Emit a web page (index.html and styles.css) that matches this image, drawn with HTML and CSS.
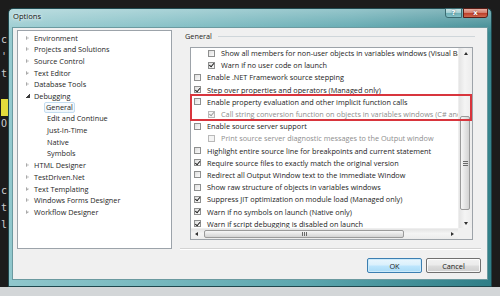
FILE: index.html
```html
<!DOCTYPE html>
<html>
<head>
<meta charset="utf-8">
<title>Options</title>
<link rel="stylesheet" href="styles.css">
</head>
<body>
<div class="desktop">
  <div class="editor">
    <div class="code">
      <div>c</div><div>'</div><div>t</div><div>&nbsp;</div><div class="hl">&nbsp;</div><div>O</div><div>&nbsp;</div><div>&nbsp;</div><div>&nbsp;</div><div>c</div><div>t</div><div>l.</div>
    </div>
  </div>
  <div class="statusbar"></div>
</div>

<div class="window">
  <div class="titlebar">
    <span class="title">Options</span>
    <div class="caption-btns">
      <span class="cap help">?</span>
      <span class="cap close">x</span>
    </div>
  </div>
  <div class="client">
    <div class="tree">
      <div class="node"><span class="tw"></span><span>Environment</span></div>
      <div class="node"><span class="tw"></span><span>Projects and Solutions</span></div>
      <div class="node"><span class="tw"></span><span>Source Control</span></div>
      <div class="node"><span class="tw"></span><span>Text Editor</span></div>
      <div class="node"><span class="tw"></span><span>Database Tools</span></div>
      <div class="node"><span class="tw open"></span><span>Debugging</span></div>
      <div class="node l2"><span class="lbl sel">General</span></div>
      <div class="node l2"><span class="lbl">Edit and Continue</span></div>
      <div class="node l2"><span class="lbl">Just-In-Time</span></div>
      <div class="node l2"><span class="lbl">Native</span></div>
      <div class="node l2"><span class="lbl">Symbols</span></div>
      <div class="node"><span class="tw"></span><span>HTML Designer</span></div>
      <div class="node"><span class="tw"></span><span>TestDriven.Net</span></div>
      <div class="node"><span class="tw"></span><span>Text Templating</span></div>
      <div class="node"><span class="tw"></span><span>Windows Forms Designer</span></div>
      <div class="node"><span class="tw"></span><span>Workflow Designer</span></div>
    </div>

    <div class="main">
      <div class="group-head"><span class="group-label">General</span><span class="rule"></span></div>
      <div class="listbox">
        <div class="rows">
          <div class="row sub"><span class="cb"></span>Show all members for non-user objects in variables windows (Visual Basic only)</div>
          <div class="row sub"><span class="cb on"></span>Warn if no user code on launch</div>
          <div class="row"><span class="cb"></span>Enable .NET Framework source stepping</div>
          <div class="row"><span class="cb on"></span>Step over properties and operators (Managed only)</div>
          <div class="row"><span class="cb"></span>Enable property evaluation and other implicit function calls</div>
          <div class="row sub dis"><span class="cb on"></span>Call string conversion function on objects in variables windows (C# and JavaScript only)</div>
          <div class="row"><span class="cb"></span>Enable source server support</div>
          <div class="row sub dis"><span class="cb"></span>Print source server diagnostic messages to the Output window</div>
          <div class="row"><span class="cb"></span>Highlight entire source line for breakpoints and current statement</div>
          <div class="row"><span class="cb on"></span>Require source files to exactly match the original version</div>
          <div class="row"><span class="cb"></span>Redirect all Output Window text to the Immediate Window</div>
          <div class="row"><span class="cb"></span>Show raw structure of objects in variables windows</div>
          <div class="row"><span class="cb on"></span>Suppress JIT optimization on module load (Managed only)</div>
          <div class="row"><span class="cb on"></span>Warn if no symbols on launch (Native only)</div>
          <div class="row"><span class="cb on"></span>Warn if script debugging is disabled on launch</div>
        </div>
        <div class="vscroll">
          <div class="varr"><span class="tri up"></span></div>
          <div class="vtrack"><div class="vthumb"><span class="vgrip"></span></div></div>
          <div class="varr"><span class="tri down"></span></div>
        </div>
        <div class="hscroll">
          <div class="harr"><span class="tri left"></span></div>
          <div class="htrack"><div class="hthumb"><span class="hgrip"></span></div></div>
          <div class="harr"><span class="tri right"></span></div>
        </div>
        <div class="corner"></div>
        <div class="annot"></div>
      </div>
      <div class="sep"></div>
      <div class="buttons">
        <button class="btn ok">OK</button>
        <button class="btn">Cancel</button>
      </div>
    </div>
  </div>
</div>
</body>
</html>
```

FILE: styles.css
```css
* { box-sizing: border-box; margin: 0; padding: 0; }
html, body { width: 500px; height: 296px; overflow: hidden; }
body {
  position: relative;
  background: #181818;
  font-family: "Open Sans", "Noto Sans", sans-serif;
  font-size: 7.3px;
  color: #1b1b1b;
}

/* background IDE */
.desktop { display: flex; flex-direction: column; height: 296px; }
.editor { flex: 1; background: #1c1c1c; padding-top: 32px; }
.code {
  font-family: "DejaVu Sans Mono", monospace;
  font-size: 10px;
  line-height: 16.8px;
  color: #cfcfcf;
  width: 9px;
  padding-left: 1px;
  overflow: hidden;
  white-space: nowrap;
}
.code .hl { background: #e4dc3c; }
.statusbar { height: 9px; background: #d3d6d8; }

/* window frame */
.window {
  position: absolute;
  left: 8px;
  top: 8px;
  width: 484px;
  height: 279px;
  display: flex;
  flex-direction: column;
  padding: 0 3px 6px 3px;
  border: 1px solid #1f484e;
  border-radius: 5px 5px 0 0;
  background:
    linear-gradient(to bottom, rgba(255,255,255,0.35), rgba(255,255,255,0) 24px),
    linear-gradient(100deg, #98cbd0 0%, #7dbcc2 30%, #5ca6ae 65%, #2f7e87 100%);
}
.titlebar {
  height: 18px;
  flex: none;
  display: flex;
  justify-content: space-between;
  align-items: flex-start;
}
.title {
  padding: 3px 0 0 1px;
  line-height: 9px;
  font-size: 7.6px;
  color: #101010;
  text-shadow: 0 0 3px rgba(255,255,255,0.9), 0 0 5px rgba(255,255,255,0.7);
}
.caption-btns { display: flex; gap: 1px; margin-top: -1px; }
.cap {
  height: 10px;
  display: flex;
  align-items: center;
  justify-content: center;
  font-family: "DejaVu Sans", sans-serif;
  font-weight: bold;
  color: #fff;
  font-size: 7px;
  line-height: 1;
}
.cap.help {
  width: 17px;
  border: 1px solid #3a6b71;
  border-radius: 0 0 0 3px;
  background: linear-gradient(#cde6e8 0%, #a3d0d4 48%, #6eaeb5 52%, #86c2c8 100%);
  text-shadow: 0 0 2px #24545a;
}
.cap.close {
  width: 25px;
  border: 1px solid #5a1d16;
  border-radius: 0 0 3px 0;
  background: linear-gradient(#e8b0a4 0%, #d47f6e 46%, #bd3d28 52%, #d0694f 100%);
  text-shadow: 0 0 2px #5a160e;
}

/* client */
.client {
  flex: 1;
  display: flex;
  align-items: flex-start;
  padding: 2px 6px 0 4px;
  background: #f0f0f0;
  border: 1px solid #6b9aa0;
}

/* tree */
.tree {
  flex: none;
  width: 155px;
  height: 219px;
  background: #fff;
  border: 1px solid #9ca3aa;
  padding-top: 1px;
}
.node {
  height: 11.6px;
  display: flex;
  align-items: center;
  padding-left: 8px;
  white-space: nowrap;
  color: #1e1e1e;
}
.tw {
  width: 0;
  height: 0;
  margin-right: 5px;
  border-top: 2.5px solid transparent;
  border-bottom: 2.5px solid transparent;
  border-left: 3px solid #a9a9a9;
  position: relative;
}
.tw::after {
  content: "";
  position: absolute;
  left: -2.4px;
  top: -1.3px;
  border-top: 1.3px solid transparent;
  border-bottom: 1.3px solid transparent;
  border-left: 1.6px solid #fff;
}
.tw.open {
  border: none;
  width: 4px;
  height: 4px;
  margin-right: 4px;
  background: linear-gradient(135deg, transparent 50%, #3a3a3a 50%);
}
.tw.open::after { display: none; }
.node.l2 { padding-left: 26px; }
.lbl {
  padding: 0 2px;
  height: 11px;
  line-height: 9px;
  border: 1px solid transparent;
}
.lbl.sel {
  padding: 0 1px;
  border-color: #c3dcf0;
  border-radius: 2px;
  background: linear-gradient(#fbfdff, #eef5fb);
}

/* main panel */
.main {
  flex: 1;
  min-width: 0;
  margin-left: 8px;
  display: flex;
  flex-direction: column;
}
.group-head {
  height: 12px;
  display: flex;
  align-items: center;
}
.group-label { padding-left: 5px; color: #1e1e1e; }
.rule {
  flex: 1;
  height: 1px;
  margin: 0 6px 0 6px;
  background: #cfd6da;
}
.listbox {
  position: relative;
  margin: 5px 8px 0 10px;
  height: 193px;
  border: 1px solid #9da3a9;
  background: #fff;
  display: grid;
  grid-template-columns: 1fr 14px;
  grid-template-rows: 1fr 11px;
}
.rows {
  grid-column: 1;
  grid-row: 1;
  overflow: hidden;
  min-width: 0;
}
.rows > .row:first-child { margin-top: -1px; }
.row {
  height: 12.2px;
  display: flex;
  align-items: center;
  padding-left: 3px;
  white-space: nowrap;
  color: #1b1b1b;
}
.row.sub { padding-left: 17px; }
.row.dis { color: #8e8e8e; }
.cb {
  flex: none;
  position: relative;
  width: 7px;
  height: 7px;
  margin-right: 6px;
  border: 1px solid #8e8f8f;
  background: linear-gradient(135deg, #dedede, #fbfbfb);
}
.cb.on::after {
  content: "";
  position: absolute;
  left: 1.3px;
  top: -0.6px;
  width: 2.2px;
  height: 4.4px;
  border-right: 1.4px solid #1c1c1c;
  border-bottom: 1.4px solid #1c1c1c;
  transform: rotate(40deg);
}
.row.dis .cb { border-color: #b9b9b9; background: #f4f4f4; }
.row.dis .cb.on::after { border-color: #9a9a9a; }

/* scrollbars */
.vscroll {
  grid-column: 2;
  grid-row: 1;
  display: flex;
  flex-direction: column;
  background: linear-gradient(90deg, #e4e4e4, #f4f4f4 45%, #ececec);
  border-left: 1px solid #eeeeee;
}
.varr { height: 10px; display: flex; align-items: center; justify-content: center; }
.vtrack { flex: 1; }
.vthumb {
  margin: 58px 2px 0 1px;
  height: 94px;
  border: 1px solid #9a9a9a;
  border-radius: 2px;
  background: linear-gradient(90deg, #f6f6f6, #e3e3e3 55%, #d3d3d3);
  display: flex;
  align-items: center;
  justify-content: center;
}
.vgrip {
  width: 5px;
  height: 5px;
  background: repeating-linear-gradient(#6a6a6a 0 1px, transparent 1px 2px);
}
.hscroll {
  grid-column: 1;
  grid-row: 2;
  display: flex;
  background: linear-gradient(#e4e4e4, #f4f4f4 45%, #ececec);
  border-top: 1px solid #eeeeee;
}
.harr { width: 11px; display: flex; align-items: center; justify-content: center; }
.htrack { flex: 1; display: flex; align-items: stretch; padding: 1px 0 1px 0; }
.hthumb {
  margin-left: 2px;
  width: 200px;
  border: 1px solid #9a9a9a;
  border-radius: 2px;
  background: linear-gradient(#f6f6f6, #e3e3e3 55%, #d3d3d3);
  display: flex;
  align-items: center;
  justify-content: center;
}
.hgrip {
  width: 5px;
  height: 4px;
  background: repeating-linear-gradient(90deg, #6a6a6a 0 1px, transparent 1px 2px);
}
.corner { grid-column: 2; grid-row: 2; background: #f0f0f0; }
.tri { width: 0; height: 0; }
.tri.up { border-left: 2.5px solid transparent; border-right: 2.5px solid transparent; border-bottom: 3px solid #303030; }
.tri.down { border-left: 2.5px solid transparent; border-right: 2.5px solid transparent; border-top: 3px solid #303030; }
.tri.left { border-top: 2.5px solid transparent; border-bottom: 2.5px solid transparent; border-right: 3px solid #303030; }
.tri.right { border-top: 2.5px solid transparent; border-bottom: 2.5px solid transparent; border-left: 3px solid #303030; }

/* red annotation box drawn over the list */
.annot {
  position: absolute;
  left: -1px;
  top: 46px;
  width: 282px;
  height: 27px;
  border: 2px solid #d8353d;
}

/* bottom */
.sep {
  margin-top: 8px;
  height: 2px;
  border-top: 1px solid #d3d3d3;
  border-bottom: 1px solid #ffffff;
}
.buttons {
  display: flex;
  justify-content: flex-end;
  gap: 4px;
  margin-top: 8px;
}
.btn {
  width: 55px;
  height: 15px;
  font-family: "Open Sans", "Noto Sans", sans-serif;
  font-size: 7.3px;
  color: #222;
  border: 1px solid #707070;
  border-radius: 2px;
  background: linear-gradient(#f2f2f2 0%, #ebebeb 48%, #dddddd 52%, #cfcfcf 100%);
  box-shadow: inset 0 0 0 1px rgba(255,255,255,0.8);
}
.btn.ok {
  border-color: #3c7fb1;
  background: linear-gradient(#eaf6fd 0%, #d9f0fc 48%, #bee6fd 52%, #a9dbf6 100%);
  box-shadow: inset 0 0 0 1px #cbeafb;
}
```
